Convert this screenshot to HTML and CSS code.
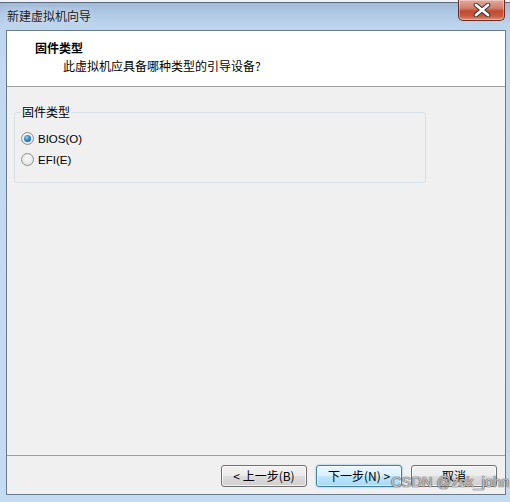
FILE: index.html
```html
<!DOCTYPE html>
<html lang="zh-CN">
<head>
<meta charset="utf-8">
<title>新建虚拟机向导</title>
<link rel="stylesheet" href="styles.css">
</head>
<body>
<div class="window">
  <div class="titlebar">
    <span class="title">新建虚拟机向导</span>
    <button class="close" type="button" aria-label="关闭">
      <svg width="20" height="14" viewBox="0 0 20 14">
        <path d="M4 2 L16 12 M16 2 L4 12" stroke="#3a2a2a" stroke-width="4.6" stroke-linecap="round"/>
        <path d="M4 2 L16 12 M16 2 L4 12" stroke="#ffffff" stroke-width="2.8" stroke-linecap="round"/>
      </svg>
    </button>
  </div>
  <div class="client">
    <div class="header">
      <div class="h-title">固件类型</div>
      <div class="h-sub">此虚拟机应具备哪种类型的引导设备?</div>
    </div>
    <div class="body">
      <fieldset class="group">
        <legend class="legend">固件类型</legend>
        <label class="radio-row"><span class="radio checked"></span><span class="rlabel">BIOS(O)</span></label>
        <label class="radio-row"><span class="radio"></span><span class="rlabel">EFI(E)</span></label>
      </fieldset>
    </div>
    <div class="footer">
      <button class="btn" type="button">&lt; 上一步(B)</button>
      <button class="btn btn-default" type="button">下一步(N) &gt;</button>
      <button class="btn" type="button">取消</button>
    </div>
  </div>
  <div class="watermark">CSDN @zsk_john</div>
</div>
</body>
</html>
```
FILE: styles.css
```css
html, body {
  margin: 0;
  padding: 0;
}
body {
  width: 510px;
  height: 502px;
  overflow: hidden;
  font-family: "Noto Sans CJK SC", "Liberation Sans", sans-serif;
  font-size: 12px;
  color: #000;
}
.window {
  position: relative;
  width: 510px;
  height: 502px;
  box-sizing: border-box;
  display: flex;
  flex-direction: column;
  background:
    linear-gradient(to bottom, #eef2f7 0, #eef2f7 2px, #5d6b7c 2px, #5d6b7c 3px, transparent 3px),
    linear-gradient(to bottom, #9fbad8 3px, #b0c9e4 14px, #bcd4ec 26px, #c3d9f0 60px, #c5dbf1 100%);
}
.titlebar {
  height: 30px;
  display: flex;
  align-items: flex-start;
  flex: none;
}
.title {
  margin-top: 8px;
  margin-left: 7px;
  line-height: 16px;
  color: #1a1a24;
  text-shadow: 0 0 6px rgba(255,255,255,0.8);
}
.close {
  margin-left: auto;
  margin-right: 5px;
  width: 47px;
  height: 21px;
  padding: 0;
  border: 1px solid #6c2a22;
  border-top: none;
  border-radius: 0 0 5px 5px;
  background: linear-gradient(to bottom, #e2a99c 0, #d3806d 40%, #c24a33 55%, #c85a3e 80%, #dc9277 100%);
  box-shadow: inset 0 0 0 1px rgba(255,255,255,0.35);
  display: flex;
  align-items: center;
  justify-content: center;
}
.close svg {
  display: block;
}
.client {
  flex: 1;
  margin: 0 4px 7px 6px;
  border: 1px solid #6b7b8e;
  display: flex;
  flex-direction: column;
  background: #f0f0f0;
}
.header {
  height: 56px;
  background: #fff;
  border-bottom: 1px solid #a0a0a0;
  padding-top: 9px;
  box-sizing: border-box;
  flex: none;
}
.h-title {
  font-weight: bold;
  padding-left: 28px;
  line-height: 16px;
}
.h-sub {
  padding-left: 56px;
  line-height: 16px;
  margin-top: 2px;
}
.body {
  flex: 1;
  padding: 17px 0 0 7px;
  border-bottom: 1px solid #a0a0a0;
}
.group {
  margin: 0;
  width: 412px;
  height: 79px;
  box-sizing: border-box;
  border: 1px solid #d5dfe5;
  border-radius: 3px;
  padding: 8px 0 0 6px;
}
.legend {
  padding: 0 1px;
  line-height: 16px;
  color: #000;
}
.radio-row {
  display: flex;
  align-items: center;
  height: 21px;
  gap: 3px;
}
.radio {
  width: 13px;
  height: 13px;
  box-sizing: border-box;
  border-radius: 50%;
  border: 1px solid #8e8f8f;
  background: radial-gradient(circle at 50% 40%, #fcfcfc 0, #e8e8e8 60%, #d2d2d2 100%);
  display: flex;
  align-items: center;
  justify-content: center;
  flex: none;
}
.radio.checked::after {
  content: "";
  width: 7px;
  height: 7px;
  border-radius: 50%;
  background: radial-gradient(circle at 40% 35%, #8fd0f4 0, #2a83c3 50%, #13467a 100%);
}
.rlabel {
  font-family: "Liberation Sans", "DejaVu Sans", sans-serif;
  font-size: 11.5px;
  margin-left: 1px;
}
.footer {
  height: 38px;
  flex: none;
  display: flex;
  justify-content: flex-end;
  gap: 9px;
  padding: 9px 8px 0 0;
  box-sizing: border-box;
}
.btn {
  width: 86px;
  height: 22px;
  padding: 0;
  border: 1px solid #707070;
  border-radius: 3px;
  background: linear-gradient(to bottom, #f2f2f2 0, #ebebeb 50%, #dddddd 50%, #cfcfcf 100%);
  box-shadow: inset 0 0 0 1px rgba(255,255,255,0.7);
  font-family: "Noto Sans CJK SC", "Liberation Sans", sans-serif;
  font-size: 12px;
  line-height: 18px;
  color: #000;
}
.btn-default {
  border-color: #3c7fb1;
  background: linear-gradient(to bottom, #eaf6fd 0, #d9f0fc 50%, #bee6fd 50%, #a7d9f5 100%);
  box-shadow: inset 0 0 0 1px rgba(255,255,255,0.6), 0 0 2px #5fb2e8;
}
.watermark {
  position: absolute;
  left: 391px;
  top: 474px;
  font-family: "Liberation Sans", sans-serif;
  font-size: 14.5px;
  color: rgba(235,235,235,0.75);
  text-shadow: 0 0 1px #555, 0 0 1px #555, 0 0 1px #777;
  letter-spacing: 0.1px;
}
```
